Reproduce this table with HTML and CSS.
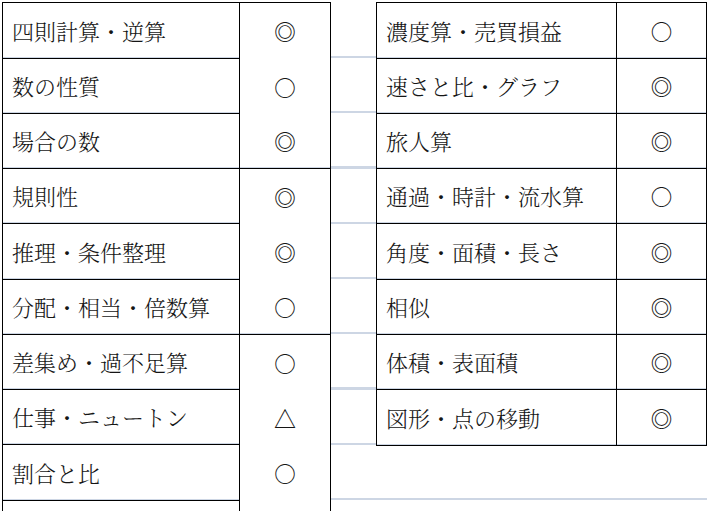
FILE: index.html
```html
<!DOCTYPE html>
<html lang="ja">
<head>
<meta charset="utf-8">
<title>単元表</title>
<link rel="stylesheet" href="styles.css">
</head>
<body>
<div class="sheet">
  <div class="tbl tbl-left">
    <div class="cell name">四則計算・逆算</div><div class="cell mark">◎</div>
    <div class="cell name">数の性質</div><div class="cell mark">○</div>
    <div class="cell name">場合の数</div><div class="cell mark end">◎</div>
    <div class="cell name">規則性</div><div class="cell mark">◎</div>
    <div class="cell name">推理・条件整理</div><div class="cell mark">◎</div>
    <div class="cell name">分配・相当・倍数算</div><div class="cell mark end">○</div>
    <div class="cell name">差集め・過不足算</div><div class="cell mark">○</div>
    <div class="cell name">仕事・ニュートン</div><div class="cell mark">△</div>
    <div class="cell name">割合と比</div><div class="cell mark">○</div>
    <div class="cell name"></div><div class="cell mark"></div>
  </div>
  <div class="tbl tbl-right">
    <div class="cell name">濃度算・売買損益</div><div class="cell mark end">○</div>
    <div class="cell name">速さと比・グラフ</div><div class="cell mark end">◎</div>
    <div class="cell name">旅人算</div><div class="cell mark end">◎</div>
    <div class="cell name">通過・時計・流水算</div><div class="cell mark end">○</div>
    <div class="cell name">角度・面積・長さ</div><div class="cell mark end">◎</div>
    <div class="cell name">相似</div><div class="cell mark end">◎</div>
    <div class="cell name">体積・表面積</div><div class="cell mark end">◎</div>
    <div class="cell name">図形・点の移動</div><div class="cell mark end">◎</div>
  </div>
</div>
</body>
</html>
```
FILE: styles.css
```css
html, body {
  margin: 0;
  padding: 0;
  overflow: hidden;
  background: #fff;
}

.sheet {
  display: flex;
  align-items: flex-start;
  gap: 45px;
  margin: 2px 0 0 2px;
  width: 705px;
  height: 509px;
  overflow: hidden;
  background-image: repeating-linear-gradient(to bottom, transparent 0, transparent 53px, #cdd6e4 53px, #cdd6e4 55.25px);
  background-position: 0 1px;
  font-family: "Noto Serif CJK JP", "Noto Sans CJK JP", serif;
  color: #151515;
}

.tbl {
  display: grid;
  border-left: 1px solid #000;
  border-top: 1px solid #000;
  background: #fff;
}

.tbl-left {
  grid-template-columns: 237px 91px;
  grid-template-rows: 56px 55px 55px 55px 56px 55px 55px 55px 56px 30px;
}

.tbl-right {
  grid-template-columns: 240px 90px;
  grid-template-rows: 56px 55px 55px 55px 56px 55px 55px 56px;
}

.cell {
  box-sizing: border-box;
  display: flex;
  align-items: center;
  border-right: 1px solid #000;
  font-size: 22px;
  line-height: 1;
  white-space: nowrap;
}

.name {
  padding-left: 9px;
  border-bottom: 1px solid #000;
  box-shadow: inset 0 -1px 0 #cdd6e4;
  font-weight: 300;
}

.mark {
  justify-content: center;
  font-weight: 300;
}

.mark.end {
  border-bottom: 1px solid #000;
  box-shadow: inset 0 -1px 0 #cdd6e4;
}
```
